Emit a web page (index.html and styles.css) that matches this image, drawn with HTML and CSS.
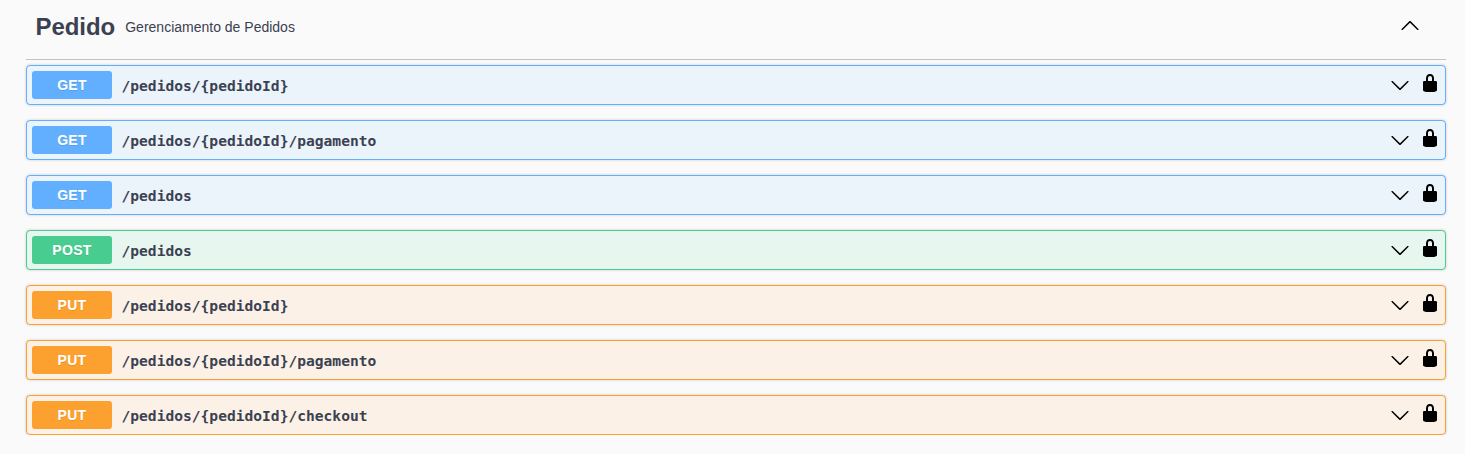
FILE: index.html
```html
<!DOCTYPE html>
<html lang="pt-BR">
<head>
<meta charset="utf-8">
<title>Pedido</title>
<link rel="stylesheet" href="styles.css">
</head>
<body>
<svg width="0" height="0" class="defs">
  <symbol id="chevron-down" viewBox="0 0 20 20"><path d="M17.418 6.109c.272-.268.709-.268.979 0s.271.701 0 .969l-7.908 7.83c-.27.268-.707.268-.979 0l-7.908-7.83c-.27-.268-.27-.701 0-.969.271-.268.709-.268.979 0L10 13.25z"/></symbol>
  <symbol id="chevron-up" viewBox="0 0 20 20"><path d="M17.418 14.908c.272.27.709.27.979 0s.271-.697 0-.969l-7.908-7.83c-.27-.268-.707-.268-.979 0l-7.908 7.83c-.27.27-.27.701 0 .969.271.27.709.27.979 0L10 7.767z"/></symbol>
  <symbol id="lock" viewBox="0 0 20 20"><path d="M15.8 8H14V5.6C14 2.703 12.665 1 10 1 7.334 1 6 2.703 6 5.6V8H4c-.553 0-1 .646-1 1.199V17c0 .549.428 1.139.951 1.307l1.197.387C5.672 18.861 6.55 19 7.1 19h5.8c.549 0 1.428-.139 1.951-.307l1.196-.387c.524-.167.953-.757.953-1.306V9.199C17 8.646 16.352 8 15.8 8zM12 8H8V5.199C8 3.754 8.797 3 10 3c1.203 0 2 .754 2 2.199V8z"/></symbol>
</svg>
<main class="section">
  <header class="tag">
    <h3 class="tag-name">Pedido</h3>
    <p class="tag-description">Gerenciamento de Pedidos</p>
    <svg class="arrow"><use href="#chevron-up"/></svg>
  </header>
  <div class="operations">
    <div class="op get"><span class="method">GET</span><span class="path">/pedidos/{pedidoId}</span><svg class="arrow"><use href="#chevron-down"/></svg><svg class="lock"><use href="#lock"/></svg></div>
    <div class="op get"><span class="method">GET</span><span class="path">/pedidos/{pedidoId}/pagamento</span><svg class="arrow"><use href="#chevron-down"/></svg><svg class="lock"><use href="#lock"/></svg></div>
    <div class="op get"><span class="method">GET</span><span class="path">/pedidos</span><svg class="arrow"><use href="#chevron-down"/></svg><svg class="lock"><use href="#lock"/></svg></div>
    <div class="op post"><span class="method">POST</span><span class="path">/pedidos</span><svg class="arrow"><use href="#chevron-down"/></svg><svg class="lock"><use href="#lock"/></svg></div>
    <div class="op put"><span class="method">PUT</span><span class="path">/pedidos/{pedidoId}</span><svg class="arrow"><use href="#chevron-down"/></svg><svg class="lock"><use href="#lock"/></svg></div>
    <div class="op put"><span class="method">PUT</span><span class="path">/pedidos/{pedidoId}/pagamento</span><svg class="arrow"><use href="#chevron-down"/></svg><svg class="lock"><use href="#lock"/></svg></div>
    <div class="op put"><span class="method">PUT</span><span class="path">/pedidos/{pedidoId}/checkout</span><svg class="arrow"><use href="#chevron-down"/></svg><svg class="lock"><use href="#lock"/></svg></div>
  </div>
</main>
</body>
</html>
```
FILE: styles.css
```css
* { box-sizing: border-box; }
body { margin: 0; background: #fafafa; color: #3b4151; font-family: "Liberation Sans", Arial, sans-serif; overflow: hidden; }
.defs { display: block; width: 0; height: 0; }
.section { padding: 0 19px 0 26px; }
.tag { display: flex; align-items: center; height: 60px; padding: 0 26px 6px 9.5px; border-bottom: 1px solid rgba(59, 65, 81, .3); }
.tag-name { margin: 0; font-size: 24px; line-height: 28px; letter-spacing: -.05px; }
.tag-description { flex: 1; margin: 0; padding-left: 10px; font-size: 14px; line-height: 20px; }
.arrow { width: 20px; height: 20px; flex: none; }
.tag .arrow { margin-bottom: 4px; }
.operations { display: flex; flex-direction: column; gap: 15px; padding-top: 5px; }
.op { display: flex; align-items: center; height: 40px; padding: 5px; border: 1px solid; border-radius: 4px; box-shadow: 0 0 3px rgba(0, 0, 0, .19); }
.get { border-color: #61affe; background: #ebf3fb; }
.post { border-color: #49cc90; background: #e8f6f0; }
.put { border-color: #fca130; background: #fbf1e6; }
.method { width: 80px; height: 28px; border-radius: 3px; color: #fff; font-size: 14px; font-weight: 700; line-height: 28px; letter-spacing: .3px; text-align: center; text-shadow: 0 1px 0 rgba(0, 0, 0, .1); }
.get .method { background: #61affe; }
.post .method { background: #49cc90; }
.put .method { background: #fca130; }
.path { flex: 1; padding: 2px 10px 0 9.5px; font: 700 14.6px/20px "DejaVu Sans Mono", monospace; }
.lock { width: 20px; height: 20px; margin: 0 0 4px 10px; flex: none; }
```
